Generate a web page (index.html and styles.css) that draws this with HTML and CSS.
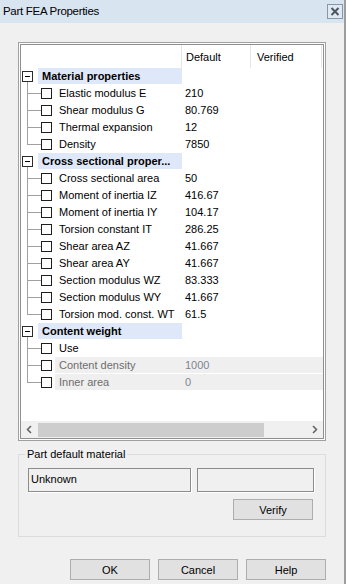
FILE: index.html
```html
<!DOCTYPE html>
<html lang="en">
<head>
  <meta charset="UTF-8">
  <link rel="stylesheet" href="styles.css">
</head>
<body>
  <div class="window">
    <div class="titlebar">
      <span class="title">Part FEA Properties</span>
      <span class="close">
        <svg width="14" height="13" viewBox="0 0 14 13"><path d="M3.5 3 L10.5 10 M10.5 3 L3.5 10" stroke="#4d5560" stroke-width="2" fill="none"/></svg>
      </span>
    </div>

    <div class="tree-frame">
      <div class="tree">
        <div class="tree-head">
          <span class="h-name"></span>
          <span class="h-col h-default">Default</span>
          <span class="h-col h-verified">Verified</span>
        </div>

        <div class="tree-rows">
          <div class="row group"><span class="expander"></span><span class="gname">Material properties</span></div>
          <div class="row item"><span class="branch"></span><span class="check"></span><span class="cells"><span class="name">Elastic modulus E</span><span class="val">210</span></span></div>
          <div class="row item"><span class="branch"></span><span class="check"></span><span class="cells"><span class="name">Shear modulus G</span><span class="val">80.769</span></span></div>
          <div class="row item"><span class="branch"></span><span class="check"></span><span class="cells"><span class="name">Thermal expansion</span><span class="val">12</span></span></div>
          <div class="row item last"><span class="branch"></span><span class="check"></span><span class="cells"><span class="name">Density</span><span class="val">7850</span></span></div>

          <div class="row group"><span class="expander"></span><span class="gname">Cross sectional proper...</span></div>
          <div class="row item"><span class="branch"></span><span class="check"></span><span class="cells"><span class="name">Cross sectional area</span><span class="val">50</span></span></div>
          <div class="row item"><span class="branch"></span><span class="check"></span><span class="cells"><span class="name">Moment of inertia IZ</span><span class="val">416.67</span></span></div>
          <div class="row item"><span class="branch"></span><span class="check"></span><span class="cells"><span class="name">Moment of inertia IY</span><span class="val">104.17</span></span></div>
          <div class="row item"><span class="branch"></span><span class="check"></span><span class="cells"><span class="name">Torsion constant IT</span><span class="val">286.25</span></span></div>
          <div class="row item"><span class="branch"></span><span class="check"></span><span class="cells"><span class="name">Shear area AZ</span><span class="val">41.667</span></span></div>
          <div class="row item"><span class="branch"></span><span class="check"></span><span class="cells"><span class="name">Shear area AY</span><span class="val">41.667</span></span></div>
          <div class="row item"><span class="branch"></span><span class="check"></span><span class="cells"><span class="name">Section modulus WZ</span><span class="val">83.333</span></span></div>
          <div class="row item"><span class="branch"></span><span class="check"></span><span class="cells"><span class="name">Section modulus WY</span><span class="val">41.667</span></span></div>
          <div class="row item last"><span class="branch"></span><span class="check"></span><span class="cells"><span class="name">Torsion mod. const. WT</span><span class="val">61.5</span></span></div>

          <div class="row group"><span class="expander"></span><span class="gname">Content weight</span></div>
          <div class="row item"><span class="branch"></span><span class="check"></span><span class="cells"><span class="name">Use</span><span class="val"></span></span></div>
          <div class="row item disabled"><span class="branch"></span><span class="check"></span><span class="cells"><span class="name">Content density</span><span class="val">1000</span></span></div>
          <div class="row item disabled last"><span class="branch"></span><span class="check"></span><span class="cells"><span class="name">Inner area</span><span class="val">0</span></span></div>
        </div>

        <div class="hscroll">
          <span class="sb-btn">
            <svg width="17" height="17" viewBox="0 0 17 17"><path d="M10 5 L6.5 8.5 L10 12" stroke="#606060" stroke-width="1.5" fill="none"/></svg>
          </span>
          <span class="sb-track"><span class="sb-thumb"></span></span>
          <span class="sb-btn">
            <svg width="17" height="17" viewBox="0 0 17 17"><path d="M7 5 L10.5 8.5 L7 12" stroke="#606060" stroke-width="1.5" fill="none"/></svg>
          </span>
        </div>
      </div>
    </div>

    <fieldset class="group-box">
      <legend>Part default material</legend>
      <div class="fields">
        <span class="field field-wide">Unknown</span>
        <span class="field field-narrow"></span>
      </div>
      <div class="verify-row">
        <button class="btn">Verify</button>
      </div>
    </fieldset>

    <div class="actions">
      <button class="btn">OK</button>
      <button class="btn">Cancel</button>
      <button class="btn">Help</button>
    </div>
  </div>
</body>
</html>
```

FILE: styles.css
```css
body {
  margin: 0;
  font-family: 'Liberation Sans', Arial, sans-serif;
  font-size: 11px;
  color: #000;
  background-color: #f0f0f0;
}

.window {
  width: 346px;
  height: 584px;
  box-sizing: border-box;
  border-right: 2px solid #9d9d9d;
  background-color: #f0f0f0;
  overflow: hidden;
}

/* title bar */

.titlebar {
  height: 23px;
  display: flex;
  align-items: center;
  justify-content: space-between;
  background-color: #d9e4f1;
  padding-left: 3px;
}

.title {
  font-size: 11.5px;
  letter-spacing: -0.3px;
  margin-top: -1px;
}

.close {
  width: 16px;
  height: 15px;
  box-sizing: border-box;
  border: 1px solid #8796a8;
  background-color: #dfe8f3;
  margin-right: 1px;
  margin-top: -1px;
  display: flex;
  align-items: center;
  justify-content: center;
}

/* tree list */

.tree-frame {
  margin: 19px 0 0 18px;
  width: 308px;
  height: 399px;
  box-sizing: border-box;
  border: 1px solid #a0a0a0;
  padding: 1px;
  background-color: #fdfdfd;
}

.tree {
  height: 100%;
  box-sizing: border-box;
  border: 1px solid #8f8f8f;
  background-color: #fff;
  display: flex;
  flex-direction: column;
}

.tree-head {
  height: 23px;
  display: flex;
  flex-shrink: 0;
}

.tree-head span {
  box-sizing: border-box;
  border-right: 1px solid #e5e5e5;
  display: flex;
  align-items: center;
}

.h-name {
  width: 161px;
}

.h-default {
  width: 69px;
  padding-left: 4px;
}

.h-verified {
  width: 71px;
  padding-left: 6px;
}

.tree-rows {
  flex: 1;
}

.row {
  height: 17px;
  display: flex;
  position: relative;
}

.group .expander {
  width: 11px;
  height: 11px;
  box-sizing: border-box;
  border: 1px solid #2b2b2b;
  margin: 3px 5px 0 1px;
  position: relative;
  background-color: #fff;
}

.group .expander::after {
  content: '';
  position: absolute;
  left: 2px;
  top: 4px;
  width: 5px;
  height: 1px;
  background-color: #000;
}

.group::after {
  content: '';
  position: absolute;
  left: 6px;
  top: 14px;
  width: 1px;
  height: 3px;
  background-color: #a0a0a0;
}

.gname {
  width: 144px;
  height: 16px;
  box-sizing: border-box;
  padding-left: 4px;
  background-color: #dfe8f8;
  font-weight: bold;
  white-space: nowrap;
  overflow: hidden;
  display: flex;
  align-items: center;
}

.branch {
  width: 20px;
  position: relative;
}

.branch::before {
  content: '';
  position: absolute;
  left: 6px;
  top: 0;
  width: 1px;
  height: 17px;
  background-color: #a0a0a0;
}

.last .branch::before {
  height: 9px;
}

.branch::after {
  content: '';
  position: absolute;
  left: 6px;
  top: 8px;
  width: 14px;
  height: 1px;
  background-color: #a0a0a0;
}

.check {
  width: 11px;
  height: 11px;
  box-sizing: border-box;
  border: 1px solid #1e1e1e;
  background-color: #fff;
  margin: 3px 3px 0 0;
}

.cells {
  flex: 1;
  height: 16px;
  display: flex;
  align-items: center;
}

.name {
  width: 127px;
  box-sizing: border-box;
  padding-left: 4px;
  white-space: nowrap;
  overflow: hidden;
}

.val {
  padding-left: 3px;
}

.disabled .cells {
  background-color: #efefef;
  color: #6d6d6d;
}

.disabled .val {
  color: #7d8590;
}

/* scrollbar */

.hscroll {
  height: 17px;
  display: flex;
  flex-shrink: 0;
  background-color: #f0f0f0;
}

.sb-btn {
  width: 17px;
  height: 17px;
}

.sb-track {
  flex: 1;
}

.sb-thumb {
  display: block;
  width: 226px;
  height: 14px;
  margin-top: 2px;
  background-color: #cdcdcd;
}

/* group box */

.group-box {
  margin: 7px 0 0 18px;
  width: 308px;
  box-sizing: border-box;
  border: 1px solid #dcdcdc;
  padding: 0 0 16px 6px;
}

.group-box legend {
  padding: 0 2px;
  line-height: 13px;
}

.fields {
  display: flex;
  gap: 6px;
  margin: 7px 0 0 3px;
}

.field {
  height: 24px;
  box-sizing: border-box;
  border: 1px solid #8c8c8c;
  box-shadow: 1px 1px 0 #fff;
  background-color: #f0f0f0;
  padding: 4px 0 0 2px;
}

.field-wide {
  width: 163px;
}

.field-narrow {
  width: 117px;
}

.verify-row {
  width: 286px;
  margin: 7px 0 0 3px;
  display: flex;
  justify-content: flex-end;
}

.verify-row .btn {
  margin-right: 1px;
}

.btn {
  width: 80px;
  height: 21px;
  box-sizing: border-box;
  border: 1px solid #adadad;
  background-color: #e1e1e1;
  font-family: 'Liberation Sans', Arial, sans-serif;
  font-size: 11px;
  color: #000;
  padding: 0;
}

/* dialog buttons */

.actions {
  display: flex;
  justify-content: flex-end;
  gap: 8px;
  margin: 22px 18px 0 0;
}
```
